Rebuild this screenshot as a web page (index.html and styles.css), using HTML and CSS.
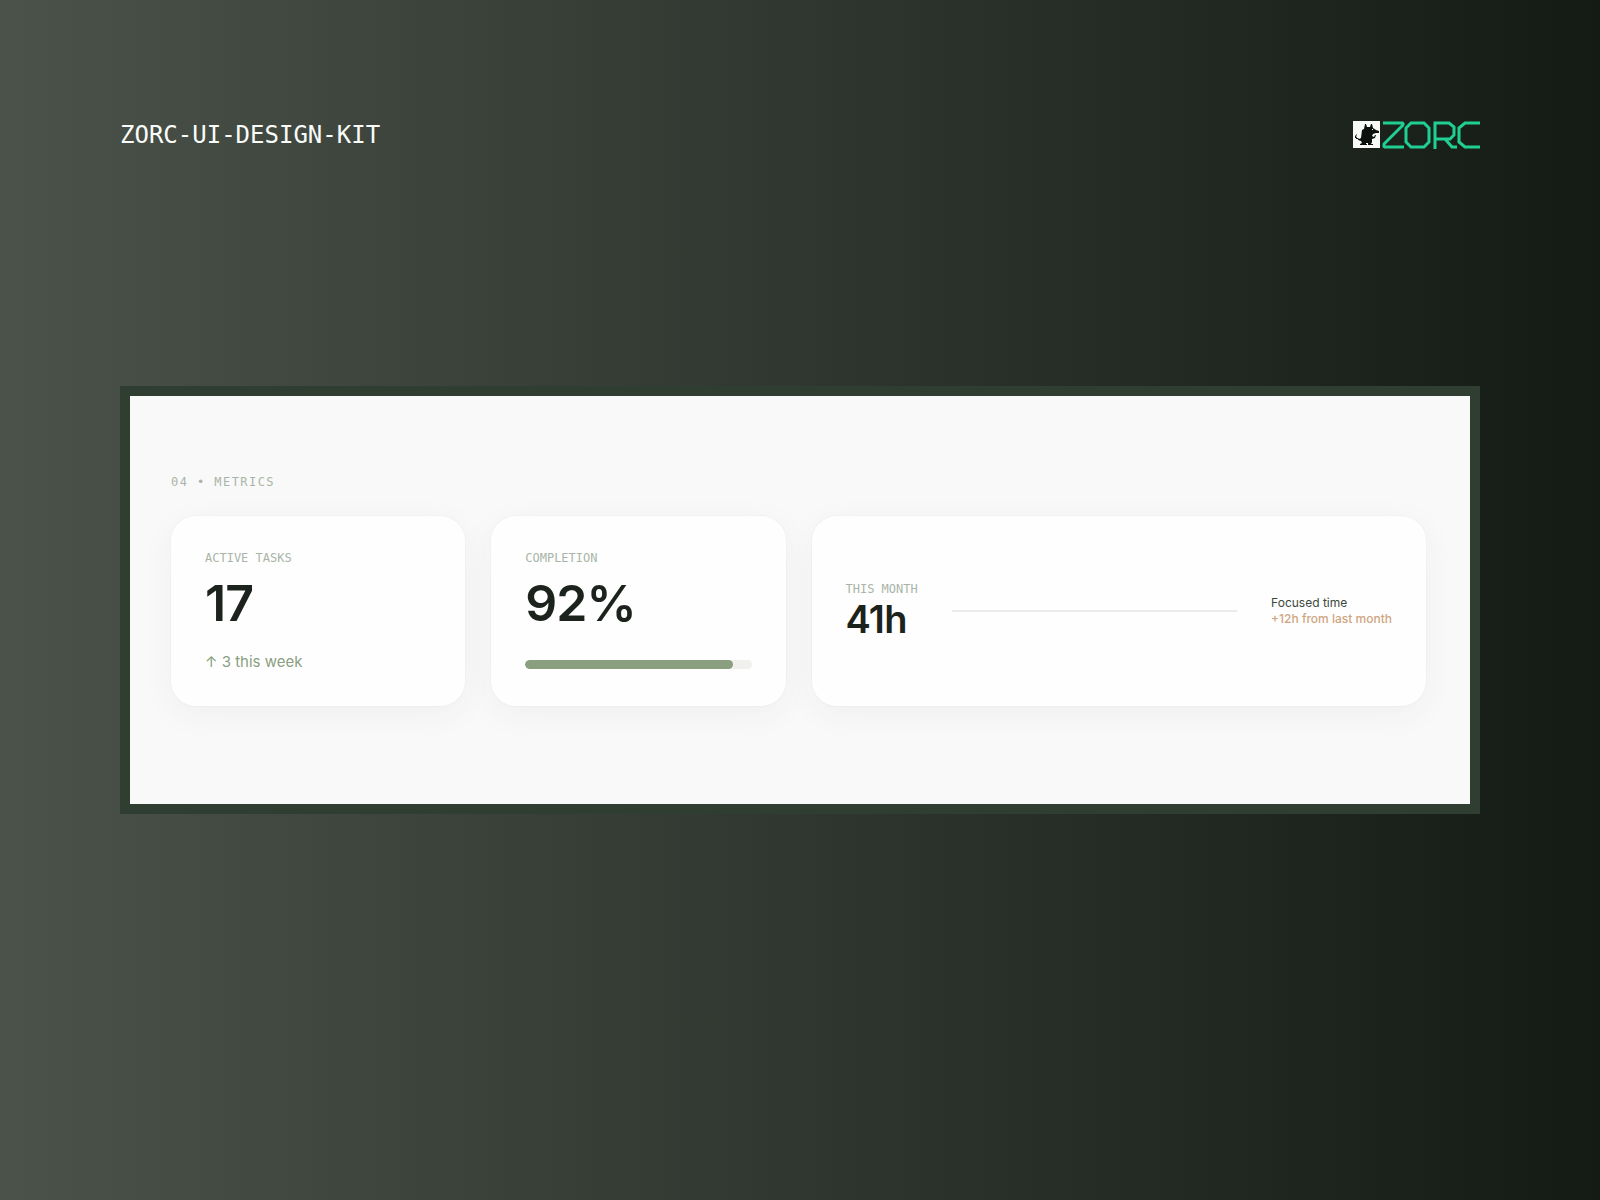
FILE: index.html
```html
<!DOCTYPE html>
<html lang="en">
<head>
    <meta charset="UTF-8">
    <meta name="viewport" content="width=device-width, initial-scale=1.0">
    <title>Zorc UI Design Kit - Metrics</title>
    <link rel="stylesheet" href="styles.css">
</head>
<body>
    <header class="page-header">
        <h1 class="kit-title">ZORC-UI-DESIGN-KIT</h1>
        <svg class="logo" viewBox="0 0 127 28" role="img" aria-label="ZORC">
            <rect width="27" height="27" fill="#f8faf8"/>
            <!-- mascot -->
            <path fill="#0d110e" d="M9 9l2-1 1-5h1l1 3h3l1-3h1l1 4 3 2 3 1v2h-3l-3 1-1 2 2 1 1-2h1l-1 3-3 1v3l-1 2h2v1h-5v-2h-2v1h1v1H7v-1l2-1-1-2-3-1v-1H3v-1H2v-2l2-2v1l-1 1 1 2h1l1 1 2-1z"/>
            <rect width="1" height="1" x="19" y="8" fill="#f8faf8"/>
            <!-- wordmark -->
            <g fill="none" stroke="#20cf94" stroke-width="3">
                <path d="M30 2h20v2L31 23v3h20" stroke-linejoin="bevel"/>
                <path d="M58 2h13l5 5v14l-5 5H58l-5-5V7z"/>
                <path d="M82 28V2h14l5 4v8l-4 4H82M92 18l7 8h5"/>
                <path d="M127 2h-15l-6 5v14l6 5h15"/>
            </g>
        </svg>
    </header>

    <main class="frame">
        <h2 class="section-title">04 • METRICS</h2>
        <div class="metrics">
            <section class="card">
                <h3 class="label">ACTIVE TASKS</h3>
                <p class="value">17</p>
                <p class="trend">↑ 3 this week</p>
            </section>

            <section class="card">
                <h3 class="label" id="completion">COMPLETION</h3>
                <p class="value">92%</p>
                <div class="progress" role="progressbar" aria-labelledby="completion" aria-valuenow="92" aria-valuemin="0" aria-valuemax="100">
                    <div class="progress-fill" style="width: 92%"></div>
                </div>
            </section>

            <section class="card card-wide">
                <div>
                    <h3 class="label">THIS MONTH</h3>
                    <p class="value value-small">41h</p>
                </div>
                <div class="divider"></div>
                <div class="note">
                    <p>Focused time</p>
                    <p class="note-accent">+12h from last month</p>
                </div>
            </section>
        </div>
    </main>
</body>
</html>
```

FILE: styles.css
```css
* {
    box-sizing: border-box;
    margin: 0;
    padding: 0;
}
body {
    min-height: 100vh;
    padding: 120px;
    display: flex;
    flex-direction: column;
    font-family: Inter, sans-serif;
    color: #1c221c;
    background: linear-gradient(90deg, #4b524a 0%, #2e352e 53%, #141b14 100%);
}
.page-header {
    display: flex;
    justify-content: space-between;
    align-items: center;
    height: 30px;
}
.kit-title {
    font-family: "DejaVu Sans Mono", monospace;
    font-size: 24px;
    line-height: 30px;
    font-weight: 400;
    color: #fafcfa;
}
.logo {
    width: 127px;
    height: 28px;
}
.frame {
    margin-top: 236px;
    padding: 78px 44px 98px 41px;
    background: #f9f9f9;
    border: 10px solid #2f3e31;
}
.section-title {
    margin-bottom: 26px;
    font-family: "DejaVu Sans Mono", monospace;
    font-size: 12px;
    line-height: 16px;
    font-weight: 400;
    letter-spacing: 0.12em;
    color: #a9b5a8;
}
.metrics {
    display: grid;
    grid-template-columns: repeat(4, 1fr);
    gap: 26px;
}
.card {
    padding: 34px;
    background: #fefefe;
    border-radius: 25px;
    box-shadow: 0 0 0 1px rgba(47, 62, 49, 0.02), 0 8px 32px rgba(47, 62, 49, 0.05);
}
.card-wide {
    grid-column: span 2;
    display: flex;
    align-items: center;
    gap: 34px;
}
.label {
    font-family: "DejaVu Sans Mono", monospace;
    font-size: 12px;
    line-height: 16px;
    font-weight: 400;
    color: #a9b5a8;
}
.value {
    margin-top: 12px;
    font-size: 50px;
    line-height: 50px;
    font-weight: 600;
    letter-spacing: -0.02em;
}
.value-small {
    margin-top: 0;
    font-size: 38px;
    line-height: 44px;
}
.trend {
    margin-top: 24px;
    font-size: 15px;
    line-height: 20px;
    color: #8a9e80;
}
.progress {
    margin-top: 32px;
    height: 9px;
    border-radius: 5px;
    background: #f0f1ef;
    overflow: hidden;
}
.progress-fill {
    height: 100%;
    border-radius: 5px;
    background: #8a9e80;
}
.divider {
    flex: 1;
    height: 2px;
    background: #ebecea;
}
.note {
    font-size: 12px;
    line-height: 16px;
    color: #3b493c;
}
.note-accent {
    font-weight: 500;
    color: #cfa581;
}
```
